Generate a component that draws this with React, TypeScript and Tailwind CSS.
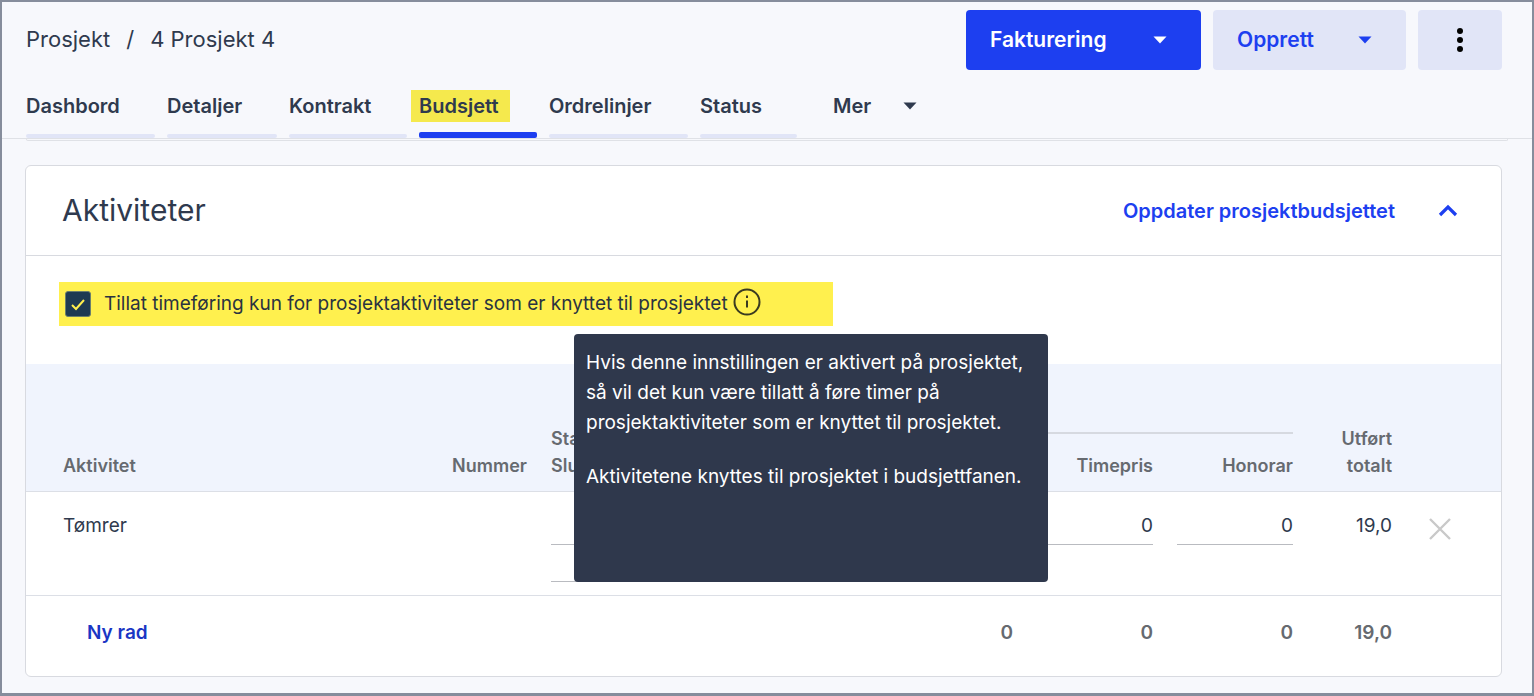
import React from "react";

function Caret({ className }: { className: string }) {
  return (
    <svg width="14" height="8" viewBox="0 0 14 8" className={className} fill="currentColor">
      <path d="M0.5 0.5h13L7 7.5z" />
    </svg>
  );
}

function Tab({ label, w, active, mark }: { label: string; w: string; active?: boolean; mark?: boolean }) {
  return (
    <div className={`flex flex-col ${w}`}>
      <div className="h-[34px] flex items-center">
        <span className={`text-[20px] font-semibold leading-[32px] text-[#2f3a4e] whitespace-nowrap ${mark ? "bg-[#f5e94d] -ml-2 pl-2 pr-3" : ""}`}>{label}</span>
      </div>
      <div className={`rounded-[2px] ${active ? "mt-[9px] h-[6px] bg-[#1d3ff0]" : "mt-[11px] h-[4px] bg-[#e1e5f7]"}`} />
    </div>
  );
}

const gridCols = "grid grid-cols-[364px_76px_172px_266px_116px_116px_75px_48px] gap-x-6 pl-[37px]";

export default function App() {
  return (
    <div className="relative w-[1534px] h-[696px] overflow-hidden bg-[#f7f8fc] border-t-2 border-x-2 border-b-[3px] border-[#868d9c] text-[#2f3a4e] font-['Inter',sans-serif]">
      <div className="px-6 pt-2" >
        <div className="flex justify-between items-start pr-[6px]">
          <div className="text-[22px] leading-[58px] text-[#2f3a4e] flex gap-4 whitespace-nowrap">
            <span>Prosjekt</span><span>/</span><span>4 Prosjekt 4</span>
          </div>
          <div className="flex gap-3">
            <button className="h-[60px] w-[235px] rounded bg-[#1d3ff0] text-white text-[21px] font-semibold flex items-center justify-between pl-6 pr-[34px]">
              <span>Fakturering</span><Caret className="text-white" />
            </button>
            <button className="h-[60px] w-[193px] rounded bg-[#e1e5f7] text-[#1d3ff0] text-[21px] font-semibold flex items-center justify-between pl-6 pr-[34px]">
              <span>Opprett</span><Caret className="text-[#1d3ff0]" />
            </button>
            <button className="h-[60px] w-[84px] rounded bg-[#e1e5f7] flex items-center justify-center">
              <svg width="8" height="26" viewBox="0 0 8 26" fill="#000"><circle cx="4" cy="4" r="3" /><circle cx="4" cy="13" r="3" /><circle cx="4" cy="22" r="3" /></svg>
            </button>
          </div>
        </div>
        <div className="flex gap-3 mt-[19px] items-start h-[49px]">
          <Tab label="Dashbord" w="w-[129px]" />
          <Tab label="Detaljer" w="w-[110px]" />
          <Tab label="Kontrakt" w="w-[118px]" />
          <Tab label="Budsjett" w="w-[118px]" active mark />
          <Tab label="Ordrelinjer" w="w-[139px]" />
          <Tab label="Status" w="w-[97px]" />
          <div className="flex items-center gap-8 h-[34px] ml-6">
            <span className="text-[20px] font-semibold text-[#2f3a4e]">Mer</span>
            <Caret className="text-[#2f3a4e]" />
          </div>
        </div>
      </div>
      <div className="border-t border-[#dfe1e6] h-[2px]" />
      <div className="mx-6 h-[2px] -mt-px border-b border-x rounded-b border-[#dfe1e6]" />

      <div className="mx-[23px] mt-[24px] w-[1477px] h-[512px] bg-white border border-[#d8dae0] rounded-md">
        <div className="h-[90px] flex items-center justify-between pl-9 pr-[43px] border-b border-[#d8dae0]">
          <h2 className="text-[30px] font-normal text-[#2f3a4e]">Aktiviteter</h2>
          <div className="flex items-center gap-[43px]">
            <span className="text-[20px] font-semibold text-[#1d3ff0]">Oppdater prosjektbudsjettet</span>
            <svg width="20" height="13" viewBox="0 0 20 13" fill="none" stroke="#1d3ff0" strokeWidth="3.2"><path d="M2 11l8-8 8 8" /></svg>
          </div>
        </div>
        <div className="h-[108px] pt-[26px] pl-[33px]">
          <div className="inline-flex items-center h-[44px] w-[774px] bg-[#fff04e] pl-[6px]">
            <span className="w-[26px] h-[26px] rounded-[3px] bg-[#1e3a52] border border-[#6b7f6c] flex items-center justify-center">
              <svg width="16" height="13" viewBox="0 0 16 13" fill="none" stroke="#fff04e" strokeWidth="2"><path d="M2 7l4 4 8-9" /></svg>
            </span>
            <span className="ml-[13px] text-[19px] text-[#2a3340] whitespace-nowrap">Tillat timeføring kun for prosjektaktiviteter som er knyttet til prosjektet</span>
            <svg className="ml-[5px] -mt-1" width="28" height="28" viewBox="0 0 28 28" fill="none" stroke="#3a3a20" strokeWidth="2"><circle cx="14" cy="14" r="12.5" /><path d="M14 12.5v7" /><path d="M14 7.5v2.5" /></svg>
          </div>
        </div>

        <div className={`${gridCols} h-[128px] bg-[#f0f4fd] border-b border-[#dcdfe6] text-[18px] font-semibold text-[#666a70] leading-[27px]`}>
          <div className="row-start-1 col-start-1 self-end pb-[12px]">Aktivitet</div>
          <div className="row-start-1 col-start-2 self-end pb-[12px] text-right whitespace-nowrap">Nummer</div>
          <div className="row-start-1 col-start-3 self-end pb-[12px] whitespace-nowrap">Start<br />Slutt</div>
          <div className="row-start-1 col-start-4 col-span-3 self-start pt-[24px] border-b-2 border-[#d6d9e0] h-[70px] pl-[17px]">Budsjett</div>
          <div className="row-start-1 col-start-5 self-end pb-[12px] text-right">Timepris</div>
          <div className="row-start-1 col-start-6 self-end pb-[12px] text-right">Honorar</div>
          <div className="row-start-1 col-start-7 self-end pb-[12px] text-right">Utført<br />totalt</div>
        </div>

        <div className={`${gridCols} h-[104px] border-b border-[#dcdfe6] text-[19px] leading-[28px]`}>
          <div className="pt-5">Tømrer</div>
          <div />
          <div className="flex flex-col">
            <div className="h-[53px] border-b border-[#b9bbc0]" />
            <div className="h-[37px] border-b border-[#b9bbc0]" />
          </div>
          <div />
          <div className="h-[53px] border-b border-[#b9bbc0] text-right pt-5">0</div>
          <div className="h-[53px] border-b border-[#b9bbc0] text-right pt-5">0</div>
          <div className="text-right pt-5">19,0</div>
          <div className="pt-[25px] pl-[12px]">
            <svg width="24" height="24" viewBox="0 0 24 24" stroke="#c9c9c9" strokeWidth="2.4"><path d="M2 2l20 20M22 2L2 22" /></svg>
          </div>
        </div>

        <div className={`${gridCols} h-[78px] items-center text-[19px] font-semibold text-[#666a70] pb-[3px]`}>
          <div className="pl-6 text-[#1a36c4]">Ny rad</div>
          <div />
          <div />
          <div className="text-right">0</div>
          <div className="text-right">0</div>
          <div className="text-right">0</div>
          <div className="text-right">19,0</div>
          <div />
        </div>
      </div>

      <div className="absolute left-[572px] top-[332px] w-[474px] h-[248px] rounded bg-[#2f384c] text-white text-[19px] leading-[30px] pt-[14px] pl-3 pr-[20px]">
        <p>Hvis denne innstillingen er aktivert på prosjektet, så vil det kun være tillatt å føre timer på prosjektaktiviteter som er knyttet til prosjektet.</p>
        <p className="mt-[24px]">Aktivitetene knyttes til prosjektet i budsjettfanen.</p>
      </div>
    </div>
  );
}
